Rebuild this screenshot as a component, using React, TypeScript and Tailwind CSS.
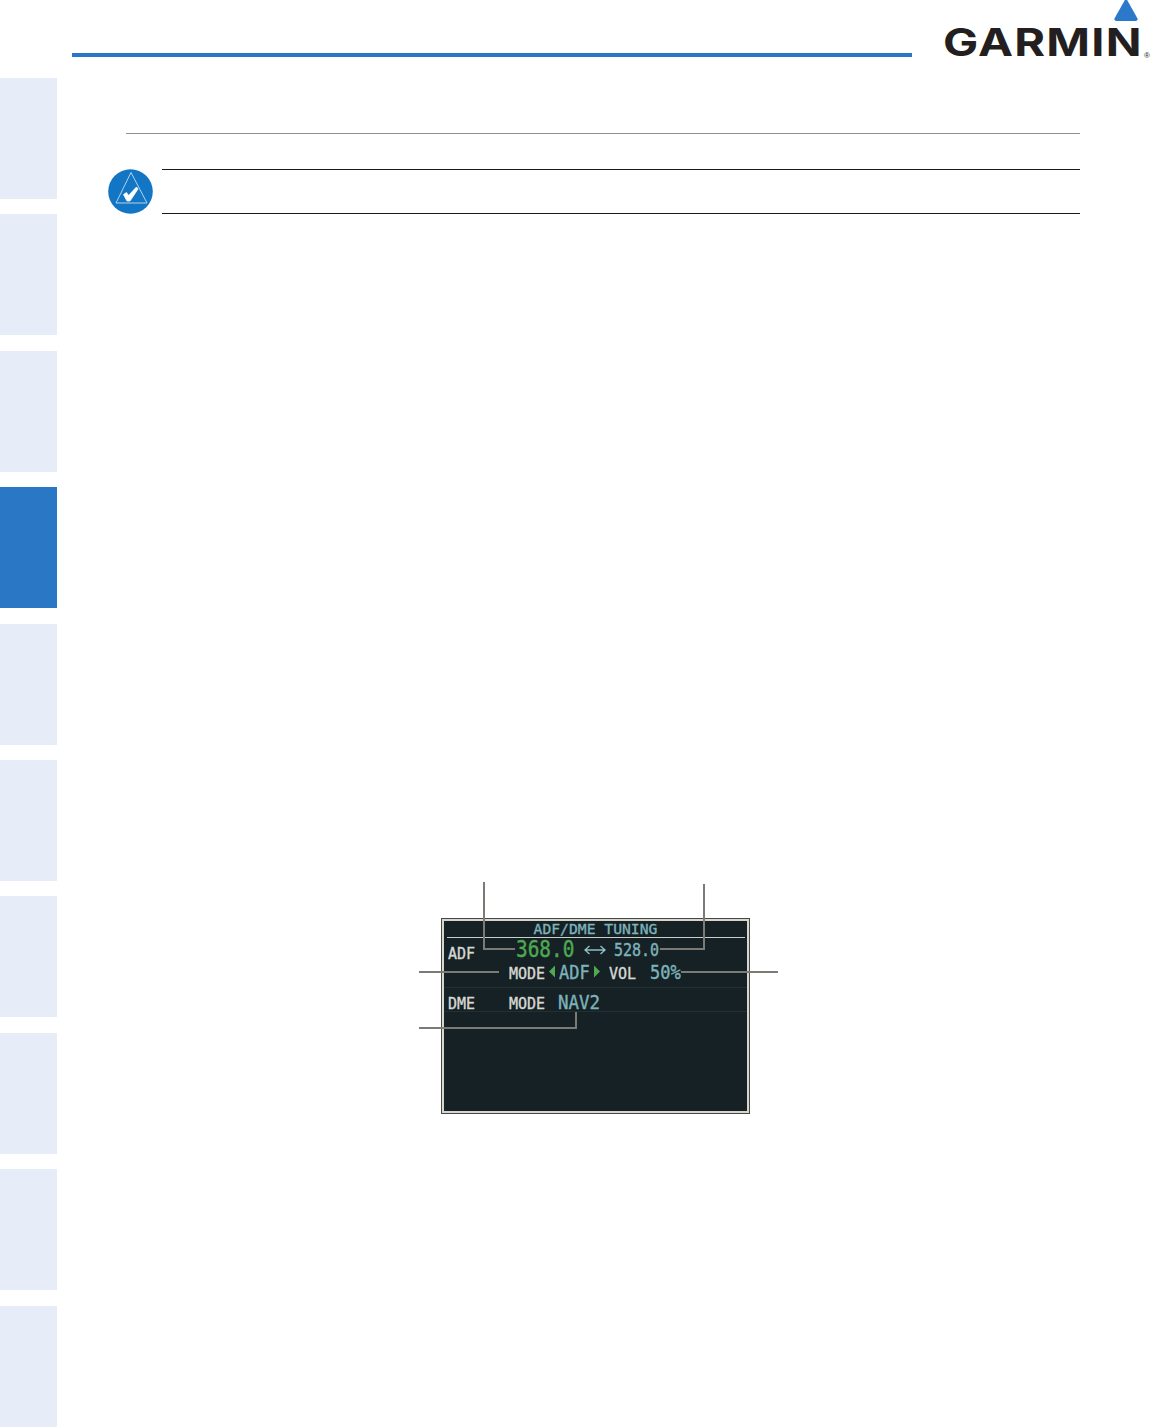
import React from 'react'

const tabs = [false, false, false, true, false, false, false, false, false, false]

const NoteIcon = () => (
  <svg width="45" height="45" viewBox="0 0 45 45" className="shrink-0">
    <circle cx="22.5" cy="22.5" r="22.3" fill="#1376c5" />
    <path d="M23 3.5 L39 34 L8 34 Z" fill="none" stroke="#dbe9f5" strokeWidth="0.8" />
    <path d="M15.5 25.5 L19 32 L22 32 L30 20 L28.5 18 L20.5 26.5 L18.5 23.5 Z" fill="#fff" stroke="#fff" strokeWidth="0.8" strokeLinejoin="round" />
  </svg>
)

const GarminLogo = () => (
  <div className="relative ml-[32px] h-[70px] w-[210px]">
    <svg width="24" height="22" viewBox="0 0 24 22" className="absolute left-[170px] top-0">
      <path d="M12 -2 L23.5 18.5 Q24 21 21.5 21 L2.5 21 Q0 21 0.5 18.5 Z" fill="#2c79cb" />
    </svg>
    <span className="absolute left-[-1px] top-[19px] origin-left scale-x-[1.22] text-[38.5px] leading-[46px] font-bold tracking-[1px] text-[#231f20] font-['Inter',sans-serif]">
      GARMIN
    </span>
    <span className="absolute left-[200px] top-[51px] text-[8px] leading-[10px] text-[#231f20] font-['Liberation_Sans',sans-serif]">®</span>
  </div>
)

const ArrowLeft = () => (
  <svg width="8" height="13" viewBox="0 0 8 13" className="mb-[6px] shrink-0">
    <path d="M7 0.5 V12.5 L1 6.5 Z" fill="#4fa950" />
  </svg>
)

const ArrowRight = () => (
  <svg width="8" height="13" viewBox="0 0 8 13" className="mb-[6px] shrink-0">
    <path d="M1 0.5 V12.5 L7 6.5 Z" fill="#4fa950" />
  </svg>
)

const TuningWindow = () => (
  <div className="flex h-[196px] w-[309px] flex-col border border-[#4a4640] bg-[#d6d6d0] px-[2px] pt-[2px] pb-[2px]">
    <div className="flex flex-1 flex-col bg-[#152125] font-['DejaVu_Sans_Mono',monospace] [-webkit-text-stroke:0.35px_currentColor]">
      <div className="flex h-[16px] items-center justify-center text-[14.7px] leading-[16px] text-[#7db3ba]">
        ADF/DME TUNING
      </div>
      <div className="mx-[3px] h-px w-[298px] bg-[#c9cfcb]" />

      <div className="flex h-[24px] items-center pl-[4px]">
        <span className="mt-[7px] w-[68px] text-[15px] leading-[16px] text-[#d8d8d2]">ADF</span>
        <span className="w-[68px] text-[19.4px] leading-[20px] text-[#4fa950] scale-y-[1.22]">368.0</span>
        <svg width="22" height="10" viewBox="0 0 22 10" className="shrink-0">
          <path d="M1 5 H21 M5.5 1 L1 5 L5.5 9 M16.5 1 L21 5 L16.5 9" fill="none" stroke="#8fc0c6" strokeWidth="1.4" />
        </svg>
        <span className="ml-[8px] w-[46px] text-[15px] leading-[16px] text-[#7db3ba] scale-y-[1.22]">528.0</span>
      </div>

      <div className="flex h-[26px] items-center border-b border-[#223034] pl-[65px]">
        <span className="mb-[2px] w-[39px] text-[15px] leading-[16px] text-[#d8d8d2]">MODE</span>
        <ArrowLeft />
        <span className="mb-[5px] ml-[3px] w-[34px] text-[17px] leading-[18px] text-[#7db3ba] scale-y-[1.1]">ADF</span>
        <ArrowRight />
        <span className="mb-[2px] ml-[8px] w-[41px] text-[15px] leading-[16px] text-[#d8d8d2]">VOL</span>
        <span className="mb-[5px] text-[17px] leading-[18px] text-[#7db3ba] scale-y-[1.1]">50%</span>
      </div>

      <div className="flex h-[24px] items-center border-b border-[#223034] pl-[4px]">
        <span className="mt-[8px] w-[61px] text-[15px] leading-[16px] text-[#d8d8d2]">DME</span>
        <span className="mt-[8px] w-[49px] text-[15px] leading-[16px] text-[#d8d8d2]">MODE</span>
        <span className="mt-[5px] text-[17.5px] leading-[18px] text-[#7db3ba] scale-y-[1.1]">NAV2</span>
      </div>
    </div>
  </div>
)

// leader lines point from the callouts into the window
const Leaders = () => (
  <>
    <div className="absolute left-[42px] top-[-36px] h-[67px] w-[2px] bg-[#7b7a74]" />
    <div className="absolute left-[42px] top-[30px] h-[2px] w-[32px] bg-[#7b7a74]" />
    <div className="absolute left-[262px] top-[-34px] h-[65px] w-[2px] bg-[#7b7a74]" />
    <div className="absolute left-[219px] top-[30px] h-[2px] w-[45px] bg-[#7b7a74]" />
    <div className="absolute left-[-22px] top-[53px] h-[2px] w-[80px] bg-[#7b7a74]" />
    <div className="absolute left-[240px] top-[53px] h-[2px] w-[97px] bg-[#7b7a74]" />
    <div className="absolute left-[-22px] top-[109px] h-[2px] w-[158px] bg-[#7b7a74]" />
    <div className="absolute left-[134px] top-[94px] h-[17px] w-[2px] bg-[#7b7a74]" />
  </>
)

export default function App() {
  return (
    <div className="flex h-[1428px] w-[1152px] overflow-hidden bg-white">
      <div className="flex w-[57px] shrink-0 flex-col gap-[15.4px] pt-[78px]">
        {tabs.map((active, i) => (
          <div key={i} className={active ? 'h-[121px] bg-[#2a77c5]' : 'h-[121px] bg-[#e6ecf8]'} />
        ))}
      </div>

      <div className="flex flex-1 flex-col">
        <div className="flex h-[133px] items-start">
          <div className="ml-[15px] mt-[53px] h-[4px] w-[840px] bg-[#2a77c9]" />
          <GarminLogo />
        </div>
        <div className="ml-[69px] h-px w-[954px] bg-[#8f8f8f]" />

        <div className="ml-[51px] mt-[35px] flex items-start">
          <NoteIcon />
          <div className="ml-[9px] h-[45px] w-[918px] border-y border-[#1a1a1a]" />
        </div>

        <div className="relative ml-[384px] mt-[704px] w-[309px]">
          <TuningWindow />
          <Leaders />
        </div>
      </div>
    </div>
  )
}
